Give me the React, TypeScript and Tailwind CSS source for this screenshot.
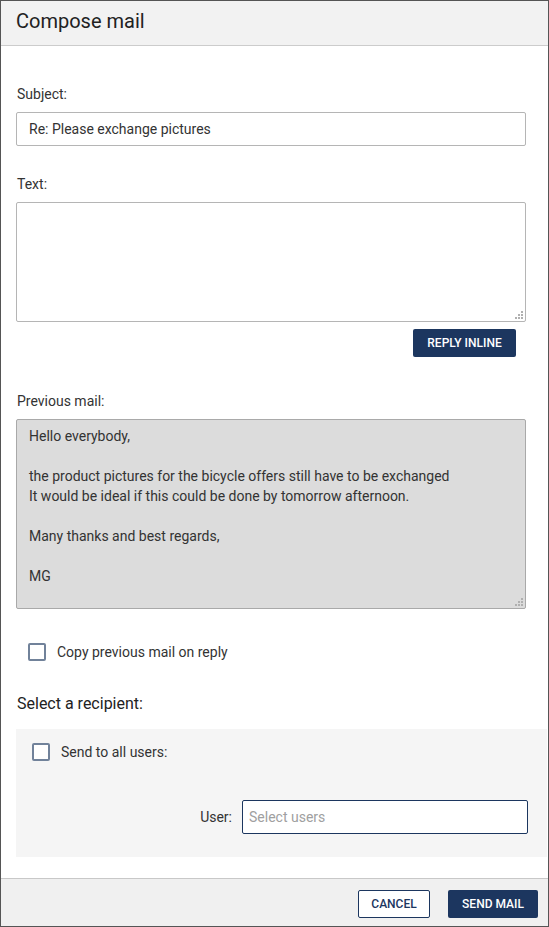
import React from "react";

const font = { fontFamily: "Roboto, 'Liberation Sans', sans-serif" };

function Checkbox() {
  return <span className="inline-block w-[18px] h-[18px] border-2 border-[#71829a] rounded-[2px] bg-white shrink-0" />;
}

function Grip() {
  return (
    <svg width="8" height="8" viewBox="0 0 8 8" className="absolute right-[3px] bottom-[3px]">
      <rect x="6" y="0" width="2" height="2" fill="#b0b0b0" />
      <rect x="3" y="3" width="2" height="2" fill="#b0b0b0" />
      <rect x="6" y="3" width="2" height="2" fill="#b0b0b0" />
      <rect x="0" y="6" width="2" height="2" fill="#b0b0b0" />
      <rect x="3" y="6" width="2" height="2" fill="#b0b0b0" />
      <rect x="6" y="6" width="2" height="2" fill="#b0b0b0" />
    </svg>
  );
}

export default function App() {
  return (
    <div style={font} className="w-[549px] h-[927px] border border-[#555] bg-white flex flex-col overflow-hidden">
      <div className="h-[45px] shrink-0 bg-[#f2f2f2] border-b border-[#cccccc] pl-[15px] pt-[8px]">
        <h1 className="text-[20px] leading-[24px] text-[#222]">Compose mail</h1>
      </div>
      <div className="flex-1 flex flex-col pl-[15px]">
        <label className="mt-[38px] text-[14px] leading-[20px] text-[#333] pl-[1px]">Subject:</label>
        <input
          readOnly
          value="Re: Please exchange pictures"
          className="mt-[8px] w-[510px] h-[34px] border border-[#b5b5b5] rounded-[2px] px-[12px] text-[14px] text-[#333] outline-none"
          style={font}
        />
        <label className="mt-[28px] text-[14px] leading-[20px] text-[#333] pl-[1px]">Text:</label>
        <div className="relative mt-[8px] w-[510px] h-[120px]">
          <textarea
            className="w-full h-full border border-[#b5b5b5] rounded-[2px] px-[12px] py-[6px] text-[14px] outline-none block resize-none"
            style={font}
          />
          <Grip />
        </div>
        <div className="w-[500px] flex justify-end mt-[7px]">
          <button className="h-[28px] w-[103px] bg-[#1c365f] text-white text-[12px] font-medium rounded-[2px] uppercase">
            Reply inline
          </button>
        </div>
        <label className="mt-[34px] text-[14px] leading-[20px] text-[#333] pl-[1px]">Previous mail:</label>
        <div className="relative mt-[8px] w-[510px] h-[190px]">
          <textarea
            readOnly
            value={"Hello everybody,\n\nthe product pictures for the bicycle offers still have to be exchanged\nIt would be ideal if this could be done by tomorrow afternoon.\n\nMany thanks and best regards,\n\nMG"}
            className="w-full h-full bg-[#dcdcdc] border border-[#a9a9a9] rounded-[2px] px-[12px] pt-[6px] text-[14px] leading-[20px] text-[#333] outline-none block resize-none"
            style={font}
          />
          <Grip />
        </div>
        <div className="mt-[33px] flex items-center pl-[12px] gap-[11px]">
          <Checkbox />
          <span className="text-[14px] leading-[20px] text-[#333]">Copy previous mail on reply</span>
        </div>
        <div className="mt-[30px] text-[16px] leading-[24px] text-[#222] pl-[1px]">Select a recipient:</div>
        <div className="mt-[13px] w-[531px] h-[128px] bg-[#f5f5f5] pl-[16px] pt-[13px] flex flex-col">
          <div className="flex items-center gap-[11px]">
            <Checkbox />
            <span className="text-[14px] leading-[20px] text-[#333]">Send to all users:</span>
          </div>
          <div className="mt-[38px] flex items-center">
            <span className="w-[210px] text-right text-[14px] text-[#333] pr-[10px]">User:</span>
            <input
              placeholder="Select users"
              className="w-[286px] h-[34px] border border-[#1c365f] rounded-[2px] bg-white px-[6px] text-[14px] outline-none placeholder:text-[#a0a0a0]"
              style={font}
            />
          </div>
        </div>
      </div>
      <div className="h-[48px] shrink-0 bg-[#f0f0f0] border-t border-[#c8c8c8] flex items-start justify-end gap-[18px] pt-[11px] pr-[10px]">
        <button className="h-[28px] w-[72px] border border-[#1c365f] bg-white text-[#1c365f] text-[12px] font-medium rounded-[2px] uppercase">
          Cancel
        </button>
        <button className="h-[28px] w-[90px] bg-[#1c365f] text-white text-[12px] font-medium rounded-[2px] uppercase">
          Send mail
        </button>
      </div>
    </div>
  );
}
